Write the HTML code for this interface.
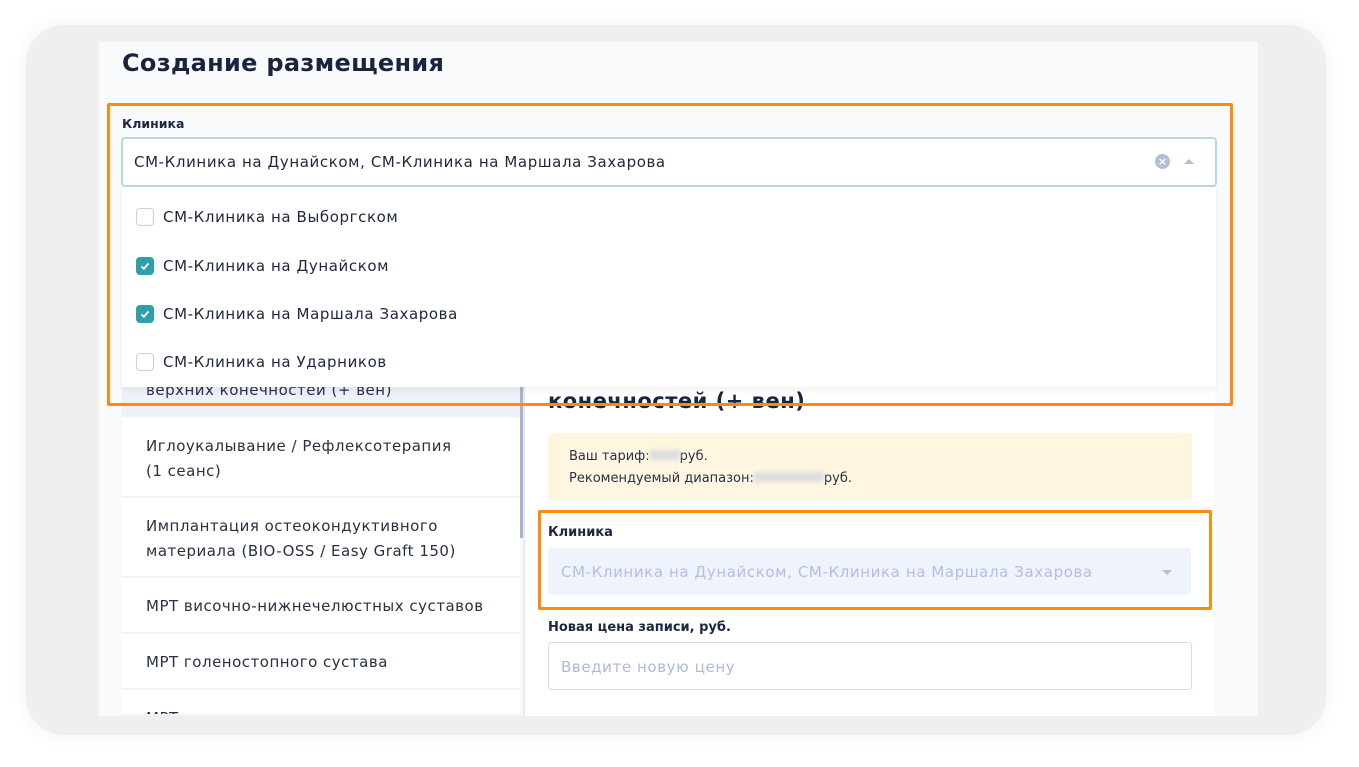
<!DOCTYPE html>
<html><head><meta charset="utf-8"><style>
*{box-sizing:border-box;margin:0;padding:0}
body{width:1359px;height:767px;background:#fff;position:relative;overflow:hidden;font-family:"DejaVu Sans","Liberation Sans",sans-serif;color:#1e2640;letter-spacing:0.5px}
.a{position:absolute;white-space:nowrap}
.outer{left:26px;top:25px;width:1300px;height:710px;background:#efefef;border-radius:38px;box-shadow:0 0 18px rgba(0,0,0,0.06)}
.panel{left:99px;top:42px;width:1159px;height:674px;background:#f9fafc;overflow:hidden}
.t{font-size:15px;color:#2a3044}
.item{left:122px;width:398px;background:#fff;border-bottom:2px solid #f1f3f8;overflow:hidden}
.cb{width:18px;height:18px;border-radius:4px;border:1.5px solid #c9d0e6;background:#fff}
.cb.on{background:#2e9ea8;border-color:#2e9ea8}
.o{font-size:15px;letter-spacing:0.6px}
</style></head><body>
<div class="a outer"></div>
<div class="a panel"></div>
<div class="a" style="left:122px;top:49px;font-size:24px;font-weight:bold;color:#1a2340;letter-spacing:0.3px">Создание размещения</div>

<div class="a item" style="top:370px;height:47px;background:#eef1f8"><div class="a t" style="left:24px;top:11px">верхних конечностей (+ вен)</div></div>
<div class="a item" style="top:418px;height:80px"><div class="a t" style="left:24px;top:16px;line-height:25px">Иглоукалывание / Рефлексотерапия<br>(1 сеанс)</div></div>
<div class="a item" style="top:498px;height:80px"><div class="a t" style="left:24px;top:16px;line-height:25px">Имплантация остеокондуктивного<br>материала (BIO-OSS / Easy Graft 150)</div></div>
<div class="a item" style="top:578px;height:56px"><div class="a t" style="left:24px;top:19px">МРТ височно-нижнечелюстных суставов</div></div>
<div class="a item" style="top:634px;height:56px"><div class="a t" style="left:24px;top:19px">МРТ голеностопного сустава</div></div>
<div class="a item" style="top:690px;height:26px"><div class="a t" style="left:24px;top:19px">МРТ головного мозга</div></div>
<div class="a" style="left:520px;top:370px;width:4px;height:168px;background:#aab3cc"></div>
<div class="a" style="left:523px;top:370px;width:2px;height:346px;background:#e7eaf2"></div>

<div class="a" style="left:525px;top:370px;width:690px;height:346px;background:#fff"></div>
<div class="a" style="left:548px;top:389px;font-size:21px;font-weight:bold;color:#1a2340">конечностей (+ вен)</div>
<div class="a" style="left:548px;top:433px;width:644px;height:68px;background:#fff6e2;border-radius:4px"></div>
<div class="a" style="left:569px;top:449px;font-size:13px;color:#2a3044;letter-spacing:0">Ваш тариф:<span style="display:inline-block;width:30px;height:10px;background:#ddd;filter:blur(2px)"></span>руб.</div>
<div class="a" style="left:569px;top:471px;font-size:13px;color:#2a3044;letter-spacing:0">Рекомендуемый диапазон:<span style="display:inline-block;width:70px;height:10px;background:#ddd;filter:blur(2px)"></span>руб.</div>
<div class="a" style="left:548px;top:525px;font-size:13px;font-weight:bold;letter-spacing:0">Клиника</div>
<div class="a" style="left:548px;top:548px;width:643px;height:47px;background:#eff3fc;border-radius:4px"><div class="a o" style="left:13px;top:15px;color:#b3bfe0">СМ-Клиника на Дунайском, СМ-Клиника на Маршала Захарова</div><div class="a" style="left:614px;top:22px;width:0;height:0;border-left:5px solid transparent;border-right:5px solid transparent;border-top:5px solid #b3bfe0"></div></div>
<div class="a" style="left:538px;top:510px;width:674px;height:100px;border:3px solid #ff8a0c;border-radius:2px"></div>
<div class="a" style="left:548px;top:620px;font-size:13px;font-weight:bold;letter-spacing:0">Новая цена записи, руб.</div>
<div class="a" style="left:548px;top:642px;width:644px;height:48px;border:1.5px solid #d4dbee;border-radius:4px;background:#fff"><div class="a o" style="left:12px;top:15px;color:#aebadb">Введите новую цену</div></div>

<div class="a" style="left:122px;top:116px;font-size:12.5px;font-weight:bold;letter-spacing:0">Клиника</div>
<div class="a" style="left:121px;top:137px;width:1096px;height:50px;background:#fff;border:2.5px solid #b5d9df;border-radius:4px"><div class="a o" style="left:11px;top:14px;color:#1e2640">СМ-Клиника на Дунайском, СМ-Клиника на Маршала Захарова</div>
<div class="a" style="left:1032px;top:15px;width:15px;height:15px;border-radius:50%;background:#b5bed9;color:#fff;font-size:11px;line-height:15px;text-align:center;font-weight:bold;letter-spacing:0">×</div>
<div class="a" style="left:1061px;top:20px;width:0;height:0;border-left:5px solid transparent;border-right:5px solid transparent;border-bottom:5px solid #b5bed9"></div></div>
<div class="a" style="left:122px;top:187px;width:1094px;height:200px;background:#fff;box-shadow:0 3px 6px rgba(0,0,0,0.06)"></div>
<div class="a cb" style="left:136px;top:208px"></div>
<div class="a o" style="left:163px;top:208px">СМ-Клиника на Выборгском</div>
<div class="a cb on" style="left:136px;top:257px"><svg class="a" style="left:2px;top:2px" width="12" height="12" viewBox="0 0 12 12"><path d="M2.5 6.5l2.3 2.3 4.7-5.3" stroke="#fff" stroke-width="1.8" fill="none"/></svg></div>
<div class="a o" style="left:163px;top:257px">СМ-Клиника на Дунайском</div>
<div class="a cb on" style="left:136px;top:305px"><svg class="a" style="left:2px;top:2px" width="12" height="12" viewBox="0 0 12 12"><path d="M2.5 6.5l2.3 2.3 4.7-5.3" stroke="#fff" stroke-width="1.8" fill="none"/></svg></div>
<div class="a o" style="left:163px;top:305px">СМ-Клиника на Маршала Захарова</div>
<div class="a cb" style="left:136px;top:353px"></div>
<div class="a o" style="left:163px;top:353px">СМ-Клиника на Ударников</div>
<div class="a" style="left:107px;top:103px;width:1126px;height:303px;border:3px solid #ff8a0c;border-radius:2px"></div>
</body></html>
